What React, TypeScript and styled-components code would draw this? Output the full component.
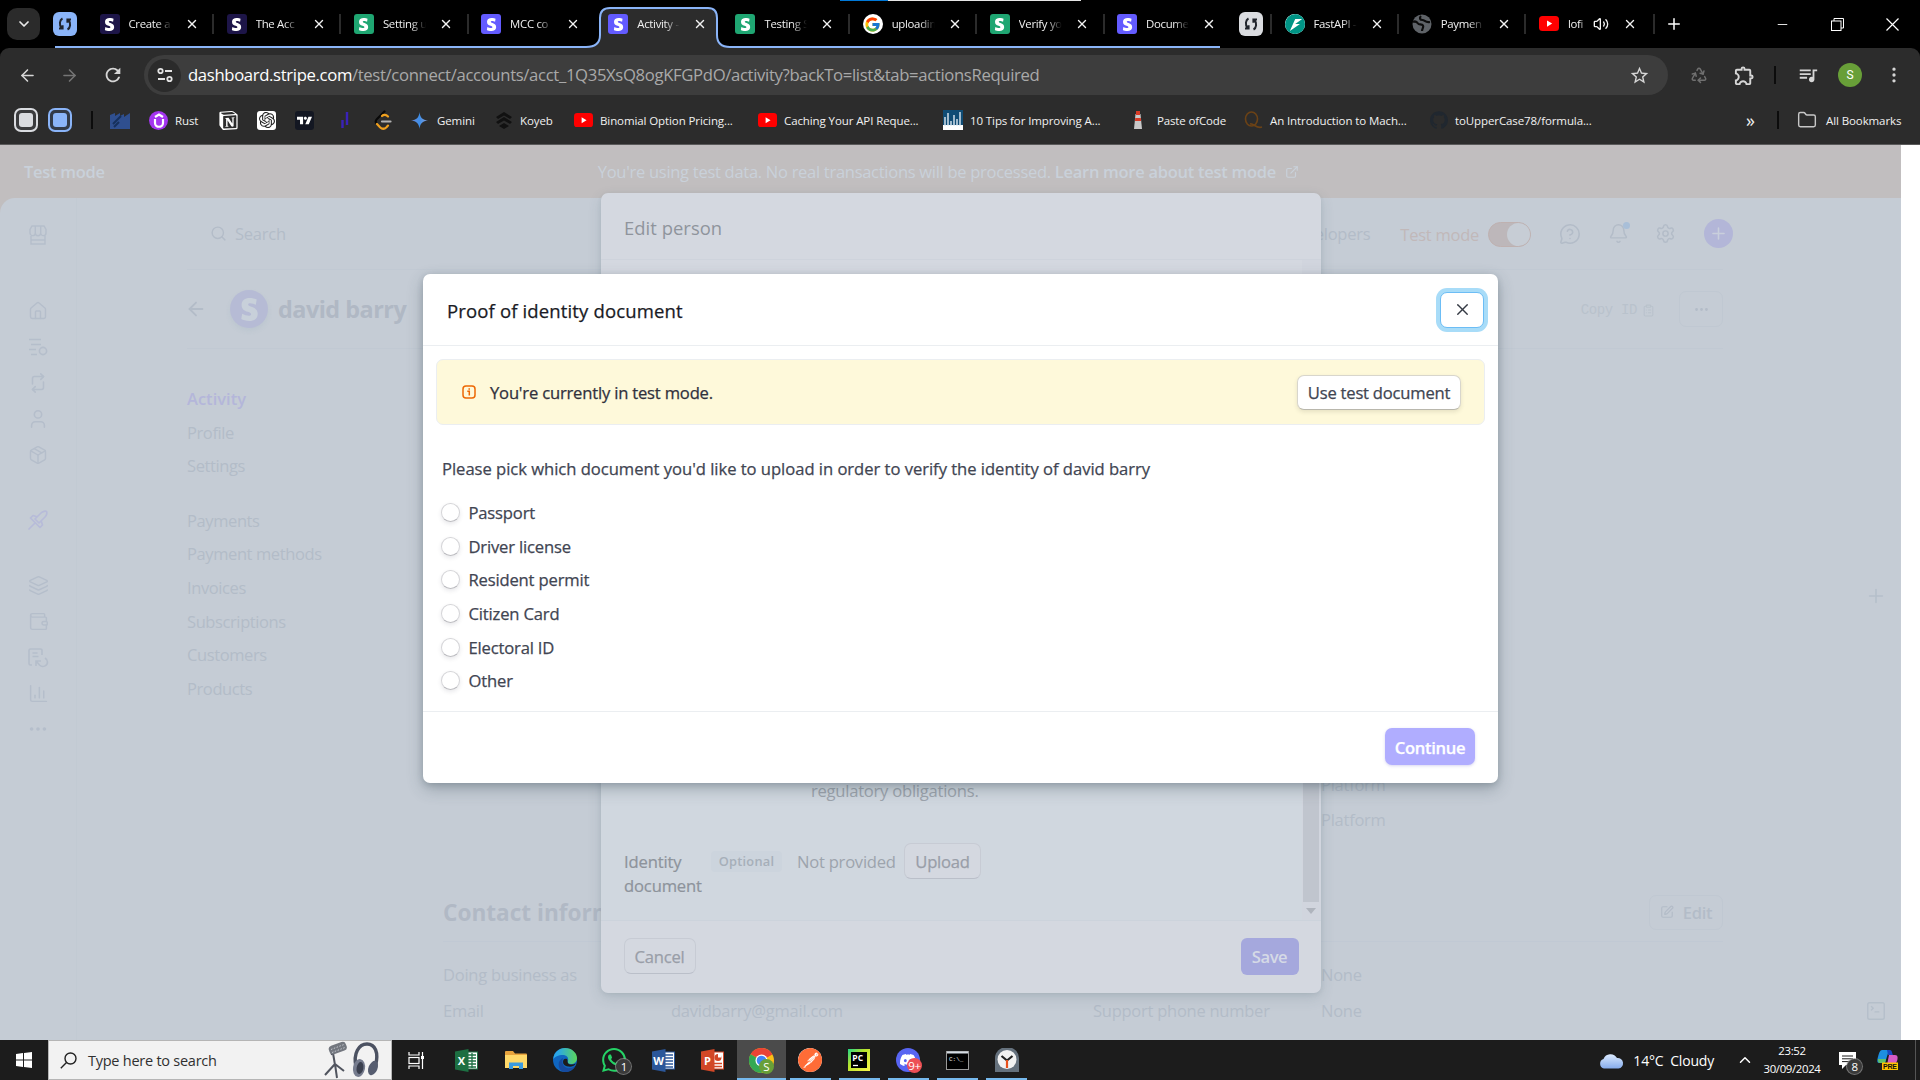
import React from "react";
import styled, { createGlobalStyle, css } from "styled-components";
import {
  ArrowLeft, ArrowRight, ChevronDown, ChevronUp, X, Plus, Minus, Recycle, Folder,
  Home, Repeat2, User, Package, Layers, Wallet, ChartColumn, Ellipsis, Search, MessageCircleQuestionMark,
  Bell, Settings, ClipboardList, SquarePen, SquareTerminal, ExternalLink, EllipsisVertical, Volume2,
} from "lucide-react";
import {
  SiStripe, SiNotion, SiOpenai, SiGithub, SiFastapi, SiPostman, SiDiscord, SiWhatsapp, SiTradingview,
} from "react-icons/si";
import { FcGoogle } from "react-icons/fc";
import { MdQueueMusic, MdOutlineExtension, MdStarBorder, MdRefresh } from "react-icons/md";

const Global = createGlobalStyle`
  * { box-sizing: border-box; }
  html, body { margin: 0; background: #000; }
  body { font-family: "Open Sans", "Noto Sans", sans-serif; overflow: hidden; }
  svg { flex: none; display: block; }
`;

/* ---------- window ---------- */
const Screen = styled.div`
  width: 1920px;
  height: 1080px;
  display: flex;
  flex-direction: column;
  overflow: hidden;
  position: relative;
`;
const LoadingStrip = styled.div`
  position: absolute;
  top: 0;
  left: 840px;
  width: 241px;
  height: 1px;
  background: linear-gradient(90deg, #0078d7 48px, #e6e6e6 48px);
`;
const TabStrip = styled.div`
  height: 48px;
  background: #000;
  display: flex;
  align-items: center;
  padding-left: 7px;
  color: #e8e8e8;
`;
const TabSearch = styled.div`
  width: 33px;
  height: 32px;
  border-radius: 10px;
  background: #2b2b2b;
  display: grid;
  place-items: center;
  margin-right: 13px;
`;
const GroupChip = styled.div<{ $bg: string }>`
  width: 24px;
  height: 24px;
  border-radius: 6px;
  background: ${(p) => p.$bg};
  color: #222;
  display: grid;
  place-items: center;
`;
const Grouped = styled.div`
  height: 48px;
  width: 1167px;
  margin-left: 0;
  padding-bottom: 0;
  display: flex;
  align-items: center;
  background: linear-gradient(#8ab4f8, #8ab4f8) 2px 46px / 1165px 2px no-repeat;
`;
const GroupHead = styled.div`
  width: 33px;
  height: 48px;
  flex: none;
  display: flex;
  align-items: center;
`;
const TabBox = styled.div<{ $sep?: boolean }>`
  width: 127.2px;
  height: 48px;
  flex: none;
  display: flex;
  align-items: center;
  padding-left: 13.5px;
  position: relative;
  ${(p) =>
    p.$sep &&
    css`
      &::before {
        content: "";
        position: absolute;
        left: -1px;
        top: 14px;
        width: 2px;
        height: 20px;
        background: #2b2b2b;
      }
    `}
`;
const ActiveShape = styled.svg`
  position: absolute;
  left: -9px;
  top: 6px;
`;
const TabText = styled.span<{ $w?: number }>`
  position: relative;
  margin-left: 9px;
  width: ${(p) => p.$w ?? 43}px;
  overflow: hidden;
  white-space: nowrap;
  font-size: 11.4px;
  line-height: 20px;
  letter-spacing: -0.3px;
  color: #f0f0f0;
  mask-image: linear-gradient(90deg, #000 65%, transparent);
`;
const TabClose = styled.span<{ $gap?: number }>`
  position: relative;
  margin-left: ${(p) => p.$gap ?? 13}px;
  color: #f2f2f2;
`;
const Fav = styled.span<{ $bg?: string; $round?: boolean; $size?: number; $fg?: string }>`
  position: relative;
  width: ${(p) => p.$size ?? 20}px;
  height: ${(p) => p.$size ?? 20}px;
  flex: none;
  border-radius: ${(p) => (p.$round ? "50%" : "3px")};
  background: ${(p) => p.$bg ?? "transparent"};
  color: ${(p) => p.$fg ?? "#fff"};
  display: grid;
  place-items: center;
  overflow: hidden;
`;
const ChipSlot = styled.div`
  width: 51px;
  padding-left: 19px;
`;
const WindowButtons = styled.div`
  margin-left: auto;
  display: flex;
  color: #fff;
  > * { width: 55px; display: grid; place-items: center; }
`;
const NewTab = styled.div`
  width: 40px;
  display: grid;
  place-items: center;
  border-left: 2px solid #2b2b2b;
  height: 20px;
  color: #fff;
`;

const Toolbar = styled.div`
  height: 56px;
  background: #2c2c2c;
  border-radius: 9px 9px 0 0;
  display: flex;
  align-items: center;
  padding: 0 0 2px 6px;
  color: #d6d6d6;
`;
const ToolSlot = styled.div<{ $w: number; $fg?: string }>`
  width: ${(p) => p.$w}px;
  flex: none;
  display: grid;
  place-items: center;
  color: ${(p) => p.$fg ?? "inherit"};
`;
const Omnibox = styled.div`
  width: 1524px;
  height: 40px;
  border-radius: 20px;
  background: #3d3d3d;
  display: flex;
  align-items: center;
  padding: 0 18px 0 4px;
  margin-left: 8px;
  flex: none;
`;
const SiteInfo = styled.div`
  width: 33px;
  height: 33px;
  border-radius: 50%;
  background: #2b2b2b;
  display: grid;
  place-items: center;
`;
const Url = styled.div`
  flex: 1;
  margin-left: 7px;
  margin-top: -2px;
  font-size: 16.7px;
  letter-spacing: -0.35px;
  color: #a9a9a9;
  white-space: nowrap;
  b { font-weight: 400; color: #fff; }
`;
const Divider = styled.div<{ $h: number }>`
  width: 2px;
  height: ${(p) => p.$h}px;
  background: #0c0c0c;
`;
const Avatar = styled.div`
  width: 24px;
  height: 24px;
  border-radius: 50%;
  background: #689f38;
  color: #fff;
  font: 12px/24px Roboto, sans-serif;
  text-align: center;
`;
const Bookmarks = styled.div`
  height: 41px;
  background: #2c2c2c;
  border-bottom: 1px solid #5a5a5a;
  display: flex;
  align-items: center;
  padding: 0 0 8px 14px;
`;
const Mark = styled.div<{ $w: number; $big?: boolean }>`
  width: ${(p) => p.$w}px;
  display: flex;
  align-items: center;
  gap: 7px;
  flex: none;
  font-size: ${(p) => (p.$big ? 18 : 11.5)}px;
  letter-spacing: -0.1px;
  color: #f1f1f1;
  white-space: nowrap;
`;
const MarkName = styled.span<{ $ls?: number }>`
  margin-left: 2px;
  letter-spacing: ${(p) => p.$ls ?? -0.1}px;
`;
const SavedGroup = styled.div<{ $c: string; $rim: string }>`
  width: 24px;
  height: 24px;
  border: 2px solid ${(p) => p.$c};
  border-radius: 7px;
  padding: 3px;
  background: ${(p) => p.$rim};
  &::after { content: ""; display: block; height: 14px; border-radius: 3px; background: ${(p) => p.$c}; }
`;

/* ---------- dashboard ---------- */
const Viewport = styled.div`
  height: 895px;
  position: relative;
  overflow: hidden;
  background: #fff;
  display: flex;
`;
const Page = styled.div`
  width: 1901px;
  height: 895px;
  background: #c1bebf;
  overflow: hidden;
`;
const Banner = styled.div`
  height: 53px;
  display: flex;
  align-items: center;
  padding-left: 24px;
  font-size: 16.5px;
  letter-spacing: -0.28px;
  color: #c9d1da;
  white-space: nowrap;
  b { font-weight: 600; }
`;
const BannerNote = styled.div`
  display: flex;
  align-items: center;
  gap: 9px;
  margin-left: 493px;
`;
const Shell = styled.div`
  height: 842px;
  background: #c5ccd5;
  border-radius: 15px 0 0 0;
  display: flex;
`;
const Side = styled.nav`
  width: 77px;
  border-right: 1px solid #c2cad3;
  display: flex;
  flex-direction: column;
  align-items: center;
  color: #b5becb;
  padding-top: 19px;
`;
const SideItem = styled.div<{ $gap?: number; $fg?: string }>`
  height: 36px;
  margin-top: ${(p) => p.$gap ?? 0}px;
  display: grid;
  place-items: center;
  color: ${(p) => p.$fg ?? "inherit"};
`;
const Content = styled.div`
  flex: 1;
  padding: 0 127px 0 110px;
  white-space: nowrap;
  color: #b3bcc8;
  font-size: 16.5px;
  letter-spacing: -0.25px;
`;
const TopRow = styled.div`
  height: 72px;
  border-bottom: 1px solid #c1c9d3;
  display: flex;
  align-items: center;
  gap: 8px;
  padding-left: 23px;
`;
const TopTools = styled.div`
  margin-left: auto;
  display: flex;
  align-items: center;
`;
const TestLabel = styled.span`
  color: #c1b8b9;
  margin: 2px 9px 0 30px;
`;
const Toggle = styled.div`
  width: 43px;
  height: 25px;
  border-radius: 13px;
  background: #bdb7ba;
  border: 1px solid #bfb1b0;
  display: flex;
  justify-content: flex-end;
  margin: 2px 28px 0 0;
  &::after { content: ""; width: 23px; height: 23px; border-radius: 50%; background: #c7cdd5; }
`;
const BellWrap = styled.div`
  position: relative;
  margin: 0 26px 0 27px;
  &::after {
    content: "";
    position: absolute;
    right: -1px;
    top: -1px;
    width: 7px;
    height: 7px;
    border-radius: 50%;
    background: #a9bfd8;
  }
`;
const AddCircle = styled.div`
  width: 29px;
  height: 29px;
  border-radius: 50%;
  background: #b3b6d8;
  color: #c9cfdc;
  display: grid;
  place-items: center;
  margin: 0 -10px 0 28px;
`;
const TitleRow = styled.div`
  height: 79px;
  border-bottom: 1px solid #c1c9d3;
  display: flex;
  align-items: center;
`;
const BackIcon = styled(ArrowLeft)`
  margin-left: -2px;
`;
const Logo = styled.div`
  width: 38px;
  height: 38px;
  border-radius: 50%;
  background: #b6bbd5;
  color: #c8d0da;
  display: grid;
  place-items: center;
  margin: 0 10px 0 23px;
  box-shadow: 0 3px 5px rgba(120, 160, 170, 0.12);
`;
const Name = styled.h1`
  margin: 0;
  font-size: 23.4px;
  font-weight: 700;
  letter-spacing: -0.5px;
  color: #b0b8c4;
`;
const CopyId = styled.div`
  margin: 2px 24px 0 auto;
  display: flex;
  align-items: center;
  gap: 5px;
  font: 14px "Liberation Mono", monospace;
  letter-spacing: -0.35px;
  color: #b9c2cc;
`;
const Ghost = styled.div<{ $w: number; $h: number }>`
  width: ${(p) => p.$w}px;
  height: ${(p) => p.$h}px;
  border: 1px solid #c0c8d2;
  border-radius: 7px;
  display: flex;
  align-items: center;
  justify-content: center;
  gap: 9px;
  font-weight: 600;
`;
const Columns = styled.div`
  display: flex;
`;
const SubNav = styled.div`
  width: 256px;
  padding-top: 33px;
  letter-spacing: -0.4px;
`;
const SubItem = styled.div<{ $on?: boolean; $gap?: number }>`
  height: 33.6px;
  line-height: 33.6px;
  margin-top: ${(p) => p.$gap ?? 0}px;
  ${(p) => p.$on && css`color: #b4b6da; font-weight: 600; letter-spacing: 0;`}
`;
const Main = styled.div`
  width: 1280px;
  padding-top: 418px;
`;
const DetailGrid = styled.div<{ $h: number }>`
  display: grid;
  grid-template-columns: 228px 422px 228px 1fr;
  height: ${(p) => p.$h}px;
  align-items: center;
`;
const SectionHead = styled.div`
  margin-top: 49px;
  height: 54px;
  display: flex;
  align-items: center;
  justify-content: space-between;
  padding-bottom: 2px;
`;
const SectionTitle = styled.h2`
  margin: 0;
  font-size: 22.6px;
  letter-spacing: 0;
  color: #b1b9c5;
`;
const Rule = styled.div`
  height: 1px;
  background: #c1c9d4;
  margin: 1px 0 14px;
`;
const Rail = styled.div`
  width: 51px;
  display: flex;
  flex-direction: column;
  align-items: center;
  color: #b5bfca;
  padding-top: 387px;
  gap: 393px;
`;

/* ---------- dialogs ---------- */
const EditDialog = styled.section`
  position: absolute;
  left: 601px;
  top: 48px;
  width: 720px;
  height: 800px;
  border-radius: 7px;
  background: #d4d8e0;
  box-shadow: 0 5px 14px rgba(60, 90, 100, 0.16), 0 1px 4px rgba(60, 90, 100, 0.1);
  display: flex;
  flex-direction: column;
  font-size: 16.6px;
  color: #9da4ad;
  white-space: nowrap;
  letter-spacing: -0.25px;
`;
const EditHead = styled.div`
  height: 67px;
  border-bottom: 1px solid #ced3dc;
  padding: 0 23px;
  line-height: 69px;
  font-size: 18.4px;
  font-weight: 500;
  letter-spacing: 0.05px;
  color: #8f949c;
`;
const EditBody = styled.div`
  flex: 1;
  background: linear-gradient(#d4d8e0 30px, #d0d7df 200px);
  border-bottom: 1px solid #ccd3dc;
  display: flex;
`;
const EditFields = styled.div`
  flex: 1;
  padding: 517px 0 0 23px;
`;
const Obligations = styled.div`
  padding-left: 187px;
  height: 54px;
  line-height: 28px;
  margin-bottom: 12px;
`;
const DocRow = styled.div`
  display: flex;
  align-items: flex-start;
`;
const DocLabel = styled.div`
  width: 87px;
  line-height: 24px;
  padding-top: 7px;
  color: #8d939b;
  font-weight: 500;
  letter-spacing: -0.15px;
  -webkit-text-stroke: 0.2px;
`;
const OptionalTag = styled.span`
  width: 71px;
  height: 21px;
  margin: 8px 15px 0 0;
  border-radius: 4px;
  background: #ccd4dd;
  text-align: center;
  font-size: 12.8px;
  line-height: 21px;
  font-weight: 600;
  letter-spacing: 0.25px;
  color: #a6afb9;
`;
const Missing = styled.span`
  width: 107px;
  line-height: 37px;
`;
const SoftButton = styled.span<{ $w: number }>`
  width: ${(p) => p.$w}px;
  height: 36px;
  border: 1px solid #c7cbd4;
  border-bottom-color: #babfc9;
  border-radius: 7px;
  background: #d4d8e0;
  text-align: center;
  line-height: 36px;
  font-weight: 500;
  color: #999ea8;
  -webkit-text-stroke: 0.25px;
`;
const ScrollTrack = styled.div`
  width: 19px;
  background: #d1d5de;
  display: flex;
  flex-direction: column;
  align-items: center;
  padding: 24px 1px 0 0;
`;
const Thumb = styled.div`
  width: 16px;
  height: 618px;
  background: #c0c5ce;
  margin-bottom: 6px;
`;
const EditFoot = styled.div`
  height: 72px;
  padding: 0 22.5px 2px;
  display: flex;
  justify-content: space-between;
  align-items: center;
`;
const SaveButton = styled.span`
  width: 58px;
  height: 37px;
  border-radius: 6px;
  background: #a5a8dd;
  color: #d5dae6;
  text-align: center;
  line-height: 37px;
  font-weight: 600;
  letter-spacing: -0.4px;
`;
const ProofDialog = styled.section`
  position: absolute;
  left: 423px;
  top: 129px;
  width: 1075px;
  height: 509px;
  border-radius: 7px;
  background: #fff;
  box-shadow: 0 6px 16px rgba(50, 70, 80, 0.3), 0 2px 6px rgba(50, 70, 80, 0.2);
  font-size: 16.6px;
  letter-spacing: -0.17px;
  color: #414552;
  white-space: nowrap;
  -webkit-text-stroke: 0.25px;
`;
const ProofHead = styled.header`
  height: 72px;
  border-bottom: 1px solid #ebeef1;
  padding: 1px 13px 0 24px;
  display: flex;
  align-items: center;
  justify-content: space-between;
  font-size: 18.5px;
  font-weight: 500;
  letter-spacing: 0.15px;
  color: #1a1b25;
`;
const CloseButton = styled.button`
  width: 44px;
  height: 36px;
  margin: -1px 1px 0 0;
  padding: 0;
  border: 1px solid #6cbdf5;
  border-radius: 7px;
  background: #fff;
  box-shadow: 0 0 0 4px #a8dcf8;
  color: #353a44;
  display: grid;
  place-items: center;
`;
const Notice = styled.div`
  margin: 13px 13px 0;
  height: 66px;
  border: 1px solid #ebeef1;
  border-radius: 7px;
  background: #fef9da;
  padding: 0 23px 0 25px;
  display: flex;
  align-items: center;
  color: #30313d;
  font-weight: 500;
`;
const NoticeText = styled.span`
  flex: 1;
  margin-left: 14px;
  letter-spacing: -0.19px;
`;
const TestButton = styled.button`
  width: 164px;
  height: 35px;
  padding: 1px 0 0;
  border: 1px solid #d8d6cc;
  border-bottom-color: #b9b7ac;
  border-radius: 7px;
  background: #fff;
  box-shadow: 0 2px 4px rgba(60, 60, 40, 0.12);
  font: 500 16.6px "Open Sans", sans-serif;
  letter-spacing: -0.22px;
  color: #414552;
  -webkit-text-stroke: 0.25px;
`;
const Prompt = styled.p`
  margin: 0;
  padding: 26px 0 0 19px;
  line-height: 36px;
  font-weight: 500;
  letter-spacing: -0.03px;
`;
const Options = styled.div`
  padding: 9px 0 0 18px;
`;
const Option = styled.label`
  height: 33.6px;
  display: flex;
  align-items: center;
  gap: 8.5px;
  font-weight: 500;
`;
const Radio = styled.span`
  width: 19px;
  height: 19px;
  border-radius: 50%;
  background: #fff;
  border: 1px solid #d5d5d8;
  border-bottom-color: #bcbcc0;
  box-shadow: 0 2px 4px rgba(60, 60, 80, 0.12);
`;
const ProofFoot = styled.footer`
  margin-top: 13px;
  height: 71px;
  border-top: 1px solid #ebeef1;
  padding: 0 23px;
  display: flex;
  align-items: center;
  justify-content: flex-end;
`;
const ContinueButton = styled.button`
  width: 90px;
  height: 37px;
  padding: 1px 0 0;
  border: 0;
  border-radius: 7px;
  background: #b0adff;
  color: #fff;
  font: 600 16.6px "Open Sans", sans-serif;
  letter-spacing: -0.3px;
  box-shadow: 0 1px 3px rgba(100, 90, 200, 0.25);
`;

/* ---------- taskbar ---------- */
const Taskbar = styled.div`
  height: 40px;
  background: #1c1c1c;
  display: flex;
  align-items: center;
  color: #fff;
`;
const StartButton = styled.div`
  width: 48px;
  display: grid;
  place-items: center;
`;
const SearchBox = styled.div`
  width: 344px;
  height: 40px;
  background: #f2f2f2;
  border: 1px solid #b5b5b5;
  display: flex;
  align-items: center;
  padding: 0 11px 0 11px;
  color: #303030;
  font-size: 14.5px;
  letter-spacing: -0.25px;
`;
const SearchHint = styled.span`
  flex: 1;
  margin-left: 11px;
  margin-top: 1px;
`;
const TaskItem = styled.div<{ $open?: boolean; $on?: boolean }>`
  width: 49.1px;
  height: 40px;
  flex: none;
  display: grid;
  place-items: center;
  position: relative;
  background: ${(p) => (p.$on ? "#4b4b4b" : "transparent")};
  &::after {
    content: "";
    position: absolute;
    bottom: 0;
    left: ${(p) => (p.$on ? 0 : 4)}px;
    right: ${(p) => (p.$on ? 0 : 4)}px;
    height: 2px;
    background: ${(p) => (p.$open ? "#76b9ed" : "transparent")};
  }
`;
const TaskList = styled.div`
  display: flex;
  margin-left: 1px;
`;
const Badge = styled.span<{ $bg: string; $x: number; $y: number; $s: number; $rim?: boolean }>`
  position: absolute;
  left: ${(p) => p.$x}px;
  top: ${(p) => p.$y}px;
  width: ${(p) => p.$s}px;
  height: ${(p) => p.$s}px;
  border-radius: 50%;
  background: ${(p) => p.$bg};
  font-size: 11.5px;
  line-height: ${(p) => p.$s}px;
  letter-spacing: -0.5px;
  text-align: center;
  ${(p) => p.$rim && css`box-shadow: 0 0 0 1px rgba(150, 150, 150, 0.7);`}
`;
const Tray = styled.div`
  margin-left: auto;
  display: flex;
  align-items: center;
  height: 40px;
  font-size: 14px;
  letter-spacing: -0.2px;
  white-space: pre;
`;
const Weather = styled.span`
  margin: 0 13px 0 9px;
`;
const TrayChevron = styled.span`
  margin: 0 1px 0 9px;
`;
const Clock = styled.div`
  width: 74px;
  text-align: center;
  font-size: 11.4px;
  line-height: 18px;
  letter-spacing: -0.35px;
  margin-top: -1px;
`;
const TrayBox = styled.div<{ $ml: number }>`
  position: relative;
  margin-left: ${(p) => p.$ml}px;
`;
const DesktopEdge = styled.div`
  width: 5px;
  height: 40px;
  border-left: 1px solid #555;
  margin-left: 17px;
`;

/* ---------- drawings ---------- */
const YouTube = ({ w = 20 }) => (
  <svg width={w} height={w * 0.76} viewBox="0 0 20 15">
    <rect width="20" height="15" rx="3.5" fill="#f00" />
    <path d="M8 4.3v6.4l5.2-3.2z" fill="#fff" />
  </svg>
);
const Globe = () => (
  <svg width="20" height="20" viewBox="0 0 20 20">
    <circle cx="10" cy="10" r="9.5" fill="#5f6368" />
    <path d="M1 8c2-1 4 0 5 1.500s4 0 5 2-1 3-1 5.500M9 2c-2 2-1 4 1.500 4S13 9 18 8" fill="none" stroke="#0c0c0c" strokeWidth="2.2" />
  </svg>
);
const Loop = ({ s = 18 }) => (
  <svg width={s} height={s} viewBox="0 0 18 18" fill="none" stroke="#20242c" strokeWidth="2">
    <path d="M6.5 3.5C3.5 5 3 10 5.5 13M3 13.6h3.6v-3.4M11.500 14.500C14.500 13 15 8 12.500 5M15 4.400h-3.600v3.400" />
  </svg>
);
const TuneIcon = () => (
  <svg width="18" height="18" viewBox="0 0 18 18" fill="none" stroke="#e3e3e3" strokeWidth="1.800">
    <circle cx="4.500" cy="5" r="2.200" />
    <path d="M9 5h7M2 13h7" />
    <circle cx="13.500" cy="13" r="2.200" />
  </svg>
);
const LeetCode = () => (
  <svg width="18" height="20" viewBox="0 0 18 20" fill="none" strokeWidth="2.200" strokeLinecap="round">
    <path d="M10.500 1.500L3 9c-1.500 1.500-1.500 3.500 0 5" stroke="#080808" />
    <path d="M14 6.500C12 4.500 9.500 4.500 8 6M3 14l3 3.200c2 2 4.500 2 6.500 0l1.500-1.600" stroke="#f0a01e" />
    <path d="M8 11.500h8.500" stroke="#b3b3b3" />
  </svg>
);
const stroke = { fill: "none", stroke: "currentColor", strokeWidth: 1.6 } as const;
const StoreIcon = () => (
  <svg width="18" height="20" viewBox="0 0 18 20" {...stroke} strokeWidth={1.4}>
    <path d="M3 1h12l2 3.500V8a2.600 2.600 0 0 1-5.300 0 2.700 2.700 0 0 1-5.400 0A2.600 2.600 0 0 1 1 8V4.500zM6.300 1v7M11.700 1v7M2 11v8h14v-8M2 15h14" />
  </svg>
);
const LaunchIcon = () => (
  <svg width="20" height="20" viewBox="0 0 20 20" {...stroke} strokeWidth={1.7} strokeLinejoin="round" strokeLinecap="round">
    <path d="M7 9l6-6c1.800-1.800 4.500-2.200 5.500-1.500C19.200 2.500 18.800 5.200 17 7l-6 6zM9 6.800L5 5.500 2.500 8 12 17.500l2.500-2.500-1.300-4M6.500 13.500L1 19" />
  </svg>
);
const BalanceIcon = () => (
  <svg width="20" height="20" viewBox="0 0 20 20" {...stroke}>
    <path d="M1 2.500h12M3 7.500h10M1 12.500h7M3 17.500h6" />
    <circle cx="15" cy="14" r="3.600" />
  </svg>
);
const BillingIcon = () => (
  <svg width="21" height="21" viewBox="0 0 21 21" {...stroke}>
    <path d="M4 18H2.500A1.500 1.500 0 0 1 1 16.500v-13A1.500 1.500 0 0 1 2.500 2h10A1.500 1.500 0 0 1 14 3.500V8M4.500 6h5M4.500 9.500h6M8 19v-5h5M8.500 14.500l3 3.500c3 3 8 1 8-3 0-2-1-3-2.500-4" />
  </svg>
);
const SwapIcon = styled(Repeat2)`
  transform: rotate(90deg);
`;
const InfoIcon = () => (
  <svg width="14" height="14" viewBox="0 0 14 14">
    <rect x="1" y="1" width="12" height="12" rx="3" fill="none" stroke="#ed6804" strokeWidth="1.500" />
    <path d="M5.300 6.300H7.300V10.500M7.200 3.200v1.600" stroke="#ed6804" strokeWidth="1.500" fill="none" />
  </svg>
);
const Mic = () => (
  <svg width="58" height="38" viewBox="0 0 58 38">
    <path d="M11 12l2 12M13 23L3 34M13 23l2 14M13 23l9 7M10 14l-1-6" stroke="#50545e" strokeWidth="2" fill="none" />
    <rect x="7" y="3" width="18" height="9" rx="3.500" transform="rotate(-20 15 8)" fill="#73777f" />
    <path d="M9 8.500l13-5M10 11.500l13-5" stroke="#c5c8d0" strokeDasharray="1.500 1.500" />
    <path d="M34 26C31 12 37 3 45 3s12 8 8.500 22" fill="none" stroke="#4c5262" strokeWidth="3.400" />
    <ellipse cx="37" cy="27" rx="6" ry="9" transform="rotate(10 37 27)" fill="#767c8e" />
    <ellipse cx="38" cy="27" rx="3.400" ry="6" transform="rotate(10 38 27)" fill="#3a3f4e" />
    <ellipse cx="51" cy="27" rx="4.500" ry="7.500" transform="rotate(22 51 27)" fill="#565d70" />
  </svg>
);
const Office = ({ c, d, l, kind }: { c: string; d: string; l: string; kind: string }) => (
  <svg width="23" height="23" viewBox="0 0 23 23">
    <rect x="11" y="3" width="11.500" height="17" fill="#fff" stroke={c} />
    {kind === "grid" && <path d="M13 6h8M13 9h8M13 12h8M13 15h8M13 18h8M17 4v15" stroke={c} strokeWidth="1.300" />}
    {kind === "lines" && <path d="M13 6h8M13 9h8M13 12h8M13 15h8M13 18h8" stroke={c} strokeWidth="1.300" />}
    {kind === "pie" && (
      <>
        <circle cx="17" cy="8.500" r="3.500" fill={c} />
        <path d="M17 8.500V5h3.500v3.500z" fill="#fff" />
        <path d="M13 14.500h8M13 17.500h8" stroke={c} strokeWidth="1.300" />
      </>
    )}
    <path d="M0 2.500L13.500 0v23L0 20.500z" fill={d} />
    <text x="6.500" y="15.500" fontSize="11" fontWeight="700" textAnchor="middle" fill="#fff" fontFamily="Open Sans">{l}</text>
  </svg>
);
const FolderTask = () => (
  <svg width="22" height="20" viewBox="0 0 22 20">
    <path d="M0 2a1 1 0 0 1 1-1h7l2 2.500h11a1 1 0 0 1 1 1V18H0z" fill="#e8a33d" />
    <path d="M0 5h22v13H0z" fill="#ffd869" />
    <path d="M4 19v-6.500h14V19h-4v-3H8v3z" fill="#3c9be0" />
  </svg>
);
const Edge = () => (
  <svg width="24" height="24" viewBox="0 0 24 24">
    <defs>
      <linearGradient id="edgeTop" x1="0" x2="1">
        <stop offset="0.200" stopColor="#2aa7e8" />
        <stop offset="1" stopColor="#5bd65a" />
      </linearGradient>
    </defs>
    <circle cx="12" cy="12" r="12" fill="#0f66c0" />
    <path d="M.3 11C1 4 6 0 12 0c7 0 12 5 12 10 0 4-3 6-6 6-3 0-4-1-3-3 1-4-2-6-5-6-5 0-8 2-9.700 4z" fill="url(#edgeTop)" />
    <path d="M9.500 12c-1 5 3 9 8 8 2 0 4-2 5-3-2 5-6 7-10 7C6 24 5 17 6 14c1-2 2-3 4-4z" fill="#164a9e" />
    <path d="M10 14c0-3 2-4 4-3 1 1 0 3 1 4 1 2 5 2 8 .5-2 3-5 3.500-8 3-3-.5-5-2-5-4.500z" fill="#1c1c1c" />
  </svg>
);
const Chrome = () => (
  <svg width="25" height="25" viewBox="0 0 24 24">
    <circle cx="12" cy="12" r="12" fill="#fbc116" />
    <path d="M12 12L1.600 6A12 12 0 0 1 22.400 6z" fill="#ea4335" />
    <path d="M1.600 6A12 12 0 0 0 12 24l5-9-5-3z" fill="#34a853" />
    <path d="M12 6h10.400L12 12z" fill="#ea4335" />
    <circle cx="12" cy="12" r="5.800" fill="#fff" />
    <circle cx="12" cy="12" r="4.600" fill="#4285f4" />
  </svg>
);
const PyCharm = () => (
  <svg width="22" height="22" viewBox="0 0 22 22">
    <defs>
      <linearGradient id="pc" x1="0" y1="0" x2="1" y2="1">
        <stop offset="0" stopColor="#21d789" />
        <stop offset="0.400" stopColor="#b8e22c" />
        <stop offset="1" stopColor="#fcf84a" />
      </linearGradient>
    </defs>
    <rect width="22" height="22" fill="url(#pc)" />
    <rect x="3" y="3" width="16" height="16" fill="#000" />
    <text x="4.300" y="12" fontSize="8.500" fontWeight="700" fill="#fff" fontFamily="Open Sans">PC</text>
    <path d="M5 16.500h5" stroke="#fff" strokeWidth="1.300" />
  </svg>
);
const Cmd = () => (
  <svg width="23" height="19" viewBox="0 0 23 19">
    <rect x=".5" y=".5" width="22" height="18" fill="#000" stroke="#9a9a9a" />
    <path d="M1 1.500h21" stroke="#d5dbe3" strokeWidth="2" />
    <text x="3" y="10" fontSize="6" fill="#e8e8e8" fontFamily="Liberation Mono">C:\_</text>
  </svg>
);
const ClockApp = () => (
  <svg width="24" height="24" viewBox="0 0 24 24">
    <path d="M0 24V10a12 11 0 0 1 24 0v14z" fill="#65717d" />
    <circle cx="12" cy="11.500" r="9.500" fill="#f2f2f2" />
    <path d="M12 12.500L6.500 8M12 12.500L17.500 8" stroke="#222" strokeWidth="2.200" />
    <path d="M12 12v8" stroke="#e8501c" strokeWidth="2.200" />
  </svg>
);
const TaskView = () => (
  <svg width="17" height="17" viewBox="0 0 17 17" fill="none" stroke="#fff" strokeWidth="1.200">
    <path d="M1 0v3h10V0M1 17v-3h10v3M14.500 0v17" />
    <rect x="1" y="5.500" width="10" height="6" />
    <path d="M13 5.500h3" strokeWidth="3" />
  </svg>
);
const Cloud = () => (
  <svg width="25" height="17" viewBox="0 0 25 17">
    <defs>
      <linearGradient id="cl" x1="0" y1="0" x2="0" y2="1">
        <stop offset="0" stopColor="#dcebff" />
        <stop offset="1" stopColor="#86acec" />
      </linearGradient>
    </defs>
    <path d="M5 16.500a5 5 0 0 1-.5-9.600A7.500 7.500 0 0 1 18 6a5.300 5.300 0 0 1 1.500 10.500z" fill="url(#cl)" />
  </svg>
);
const Copilot = () => (
  <svg width="21" height="20" viewBox="0 0 21 20">
    <path d="M5 0h7l-4 13H2c-2 0-2-3-1-6 1-4 2-7 4-7z" fill="#1c8fe0" />
    <path d="M1 9h8l-1 4H3c-2 0-2-2-2-4z" fill="#5ec26a" />
    <path d="M10 0h3c2 0 2 3 3 5h-5z" fill="#1846c0" />
    <path d="M12 5h6c3 0 3 3 2 6l-2 4h-8z" fill="#d65bc6" />
    <rect x="5" y="12.500" width="16" height="7.500" fill="#ffc400" />
    <text x="6" y="18.800" fontSize="7" fontWeight="700" fill="#111" fontFamily="Liberation Sans">PRE</text>
  </svg>
);
const FastApiFav = styled(SiFastapi)`
  background: #fff;
`;

/* ---------- data ---------- */
type Kind = "navy" | "green" | "violet" | "google";
const favColor: Record<string, string> = { navy: "#1d1548", green: "#1fa672", violet: "#635bff" };
const StripeFav = ({ kind }: { kind: Kind }) =>
  kind === "google" ? (
    <Fav $bg="#fff" $round><FcGoogle size={17} /></Fav>
  ) : (
    <Fav $bg={favColor[kind]}><SiStripe size={13} /></Fav>
  );
const groupTabs: { kind: Kind; text: string; active?: boolean }[] = [
  { kind: "navy", text: "Create a" },
  { kind: "navy", text: "The Acc" },
  { kind: "green", text: "Setting u" },
  { kind: "violet", text: "MCC co" },
  { kind: "violet", text: "Activity -", active: true },
  { kind: "green", text: "Testing S" },
  { kind: "google", text: "uploadin" },
  { kind: "green", text: "Verify yo" },
  { kind: "violet", text: "Docume" },
];
const documents = ["Passport", "Driver license", "Resident permit", "Citizen Card", "Electoral ID", "Other"];

export default function App() {
  return (
    <Screen>
      <Global />
      <TabStrip>
        <TabSearch><ChevronDown size={16} strokeWidth={2.6} /></TabSearch>
        <Grouped>
          <GroupHead><GroupChip $bg="#8ab4f8"><Loop /></GroupChip></GroupHead>
          {groupTabs.map((t, i) => (
            <TabBox key={t.text} $sep={i > 0 && i !== 4 && i !== 5}>
              {t.active && (
                <ActiveShape width="144" height="42" viewBox="0 0 144 42">
                  <path d="M0 41C9 41 14 37 14 29V12C14 5 18 2 24 2H122C128 2 131 5 131 12V29C131 37 136 41 144 41V42H0z" fill="#2c2c2c" />
                  <path d="M0 41C9 41 14 37 14 29V12C14 5 18 2 24 2H122C128 2 131 5 131 12V29C131 37 136 41 144 41" fill="none" stroke="#8ab4f8" strokeWidth="2" />
                </ActiveShape>
              )}
              <StripeFav kind={t.kind} />
              <TabText>{t.text}</TabText>
              <TabClose><X size={14} strokeWidth={2.4} /></TabClose>
            </TabBox>
          ))}
        </Grouped>
        <ChipSlot><GroupChip $bg="#dadce0"><Loop /></GroupChip></ChipSlot>
        <TabBox $sep>
          <Fav $bg="#009485" $round><FastApiFav size={22} color="#009485" /></Fav>
          <TabText>FastAPI -</TabText>
          <TabClose><X size={14} strokeWidth={2.4} /></TabClose>
        </TabBox>
        <TabBox $sep>
          <Globe />
          <TabText>Paymen</TabText>
          <TabClose><X size={14} strokeWidth={2.4} /></TabClose>
        </TabBox>
        <TabBox $sep>
          <YouTube />
          <TabText $w={18}>lofi</TabText>
          <TabClose $gap={7}><Volume2 size={16} /></TabClose>
          <TabClose $gap={14}><X size={14} strokeWidth={2.4} /></TabClose>
        </TabBox>
        <NewTab><Plus size={18} /></NewTab>
        <WindowButtons>
          <span><Minus size={15} strokeWidth={1.4} /></span>
          <span>
            <svg width="13" height="13" viewBox="0 0 13 13" fill="none" stroke="#fff"><path d="M3 3V.5h9.500V10H10" /><rect x=".5" y="3" width="9.500" height="9.500" /></svg>
          </span>
          <span><svg width="13" height="13" viewBox="0 0 13 13" stroke="#fff" strokeWidth="1.200"><path d="M.5.5l12 12M12.500.5l-12 12" /></svg></span>
        </WindowButtons>
      </TabStrip>
      <LoadingStrip />

      <Toolbar>
        <ToolSlot $w={42}><ArrowLeft size={19} /></ToolSlot>
        <ToolSlot $w={42} $fg="#757575"><ArrowRight size={19} /></ToolSlot>
        <ToolSlot $w={46}><MdRefresh size={22} /></ToolSlot>
        <Omnibox>
          <SiteInfo><TuneIcon /></SiteInfo>
          <Url><b>dashboard.stripe.com</b>/test/connect/accounts/acct_1Q35XsQ8ogKFGPdO/activity?backTo=list&amp;tab=actionsRequired</Url>
          <MdStarBorder size={21} />
        </Omnibox>
        <ToolSlot $w={62} $fg="#707070"><Recycle size={18} /></ToolSlot>
        <ToolSlot $w={28}><MdOutlineExtension size={23} /></ToolSlot>
        <ToolSlot $w={34}><Divider $h={18} /></ToolSlot>
        <ToolSlot $w={32}><MdQueueMusic size={22} /></ToolSlot>
        <ToolSlot $w={52}><Avatar>S</Avatar></ToolSlot>
        <ToolSlot $w={36}><EllipsisVertical size={20} /></ToolSlot>
      </Toolbar>

      <Bookmarks>
        <Mark $w={34}><SavedGroup $c="#dadce0" $rim="#3a3b3d" /></Mark>
        <Mark $w={43}><SavedGroup $c="#8ab4f8" $rim="#323a48" /></Mark>
        <Mark $w={19}><Divider $h={18} /></Mark>
        <Mark $w={39}>
          <svg width="20" height="17" viewBox="0 0 20 17"><path d="M0 3l5-2v3l5-3v3l4-2v3l6-4v16H0z" fill="#2f4f8f" /><path d="M3 12l8-8M4 15l5-5" stroke="#16305c" strokeWidth="2" /></svg>
        </Mark>
        <Mark $w={69}>
          <Fav $bg="#a435f0" $round $size={19}>
            <svg width="12" height="15" viewBox="0 0 12 15" fill="none" stroke="#fff" strokeWidth="2.200"><path d="M2 6v4c0 5 8 5 8 0V6M2 4l4-2.500L10 4" /></svg>
          </Fav>
          Rust
        </Mark>
        <Mark $w={39}><Fav $fg="#fff"><SiNotion size={19} /></Fav></Mark>
        <Mark $w={38}><Fav $bg="#fff" $fg="#222" $size={19}><SiOpenai size={16} /></Fav></Mark>
        <Mark $w={45}><Fav $bg="#131722" $size={19}><SiTradingview size={15} /></Fav></Mark>
        <Mark $w={34}><svg width="10" height="18" viewBox="0 0 10 18"><path d="M2.500 9v8M7 1v13" stroke="#3a22b8" strokeWidth="2.400" /></svg></Mark>
        <Mark $w={37}><LeetCode /></Mark>
        <Mark $w={84}>
          <svg width="17" height="17" viewBox="0 0 17 17"><defs><linearGradient id="gm"><stop offset="0" stopColor="#6a8ad8" /><stop offset=".5" stopColor="#3f8ee8" /><stop offset="1" stopColor="#8aa0d8" /></linearGradient></defs><path d="M8.500 0C9 5.500 11.500 8 17 8.500 11.500 9 9 11.500 8.500 17 8 11.500 5.500 9 0 8.500 5.500 8 8 5.500 8.500 0z" fill="url(#gm)" /></svg>
          <MarkName>Gemini</MarkName>
        </Mark>
        <Mark $w={79}>
          <svg width="18" height="17" viewBox="0 0 18 17"><path d="M9 0l8 5-2 2-6-3.500L3 7 1 5zM9 5l8 5-2 2-6-3.500L3 12l-2-2zM9 11l5 3-5 3-5-3z" fill="#111" /></svg>
          Koyeb
        </Mark>
        <Mark $w={184}><YouTube w={19} />Binomial Option Pricing...</Mark>
        <Mark $w={185}><YouTube w={19} />Caching Your API Reque...</Mark>
        <Mark $w={185}>
          <svg width="20" height="20" viewBox="0 0 20 20"><path d="M0 0h20v20H0z" fill="#0f4c75" /><path d="M0 20v-5h20v5z" fill="#fff" /><path d="M2 16V7M5 16V3M8 16v-5M11 16V5M14 16V9M17 16V2" stroke="#dfeaf2" strokeWidth="1.400" /></svg>
          10 Tips for Improving A...
        </Mark>
        <Mark $w={116}>
          <svg width="20" height="18" viewBox="0 0 20 18"><path d="M7.500 3h5l1.500 15H6z" fill="#c9c9c9" /><path d="M8 0h4v4H8zM7.200 7h5.600l.3 3H7z" fill="#d83a25" /></svg>
          <MarkName $ls={-0.15}>Paste ofCode</MarkName>
        </Mark>
        <Mark $w={186}><svg width="19" height="19" viewBox="0 0 19 19" fill="none" stroke="#6b4216" strokeWidth="1.600"><ellipse cx="7.500" cy="8" rx="6" ry="7" /><path d="M6 13c4-1 6 5 12 3" /></svg>An Introduction to Mach...</Mark>
        <Mark $w={316}><SiGithub size={18} color="#20272f" /><span>toUpperCase78/formula...</span></Mark>
        <Mark $w={31} $big>»</Mark>
        <Mark $w={20}><Divider $h={18} /></Mark>
        <Mark $w={120}><Folder size={20} strokeWidth={1.7} color="#c7c7c7" /><MarkName>All Bookmarks</MarkName></Mark>
      </Bookmarks>

      <Viewport>
        <Page>
          <Banner>
            <b>Test mode</b>
            <BannerNote>
              <span>You're using test data. No real transactions will be processed. <b>Learn more about test mode</b></span>
              <ExternalLink size={14} />
            </BannerNote>
          </Banner>
          <Shell>
            <Side>
              <SideItem><StoreIcon /></SideItem>
              <SideItem $gap={40}><Home size={20} strokeWidth={1.7} /></SideItem>
              <SideItem><BalanceIcon /></SideItem>
              <SideItem><SwapIcon size={22} strokeWidth={1.7} /></SideItem>
              <SideItem><User size={22} strokeWidth={1.7} /></SideItem>
              <SideItem><Package size={20} strokeWidth={1.7} /></SideItem>
              <SideItem $gap={29} $fg="#b7bbd9"><LaunchIcon /></SideItem>
              <SideItem $gap={29}><Layers size={21} strokeWidth={1.7} /></SideItem>
              <SideItem><Wallet size={21} strokeWidth={1.7} /></SideItem>
              <SideItem><BillingIcon /></SideItem>
              <SideItem><ChartColumn size={21} strokeWidth={1.7} /></SideItem>
              <SideItem><Ellipsis size={22} /></SideItem>
            </Side>
            <Content>
              <TopRow>
                <Search size={17} />
                <span>Search</span>
                <TopTools>
                  <span>Developers</span>
                  <TestLabel>Test mode</TestLabel>
                  <Toggle />
                  <MessageCircleQuestionMark size={22} strokeWidth={1.7} />
                  <BellWrap><Bell size={21} strokeWidth={1.7} /></BellWrap>
                  <Settings size={21} strokeWidth={1.7} />
                  <AddCircle><Plus size={19} /></AddCircle>
                </TopTools>
              </TopRow>
              <TitleRow>
                <BackIcon size={22} />
                <Logo><SiStripe size={23} /></Logo>
                <Name>david barry</Name>
                <CopyId>Copy ID <ClipboardList size={13} /></CopyId>
                <Ghost $w={44} $h={36}><Ellipsis size={17} /></Ghost>
              </TitleRow>
              <Columns>
                <SubNav>
                  <SubItem $on>Activity</SubItem>
                  <SubItem>Profile</SubItem>
                  <SubItem>Settings</SubItem>
                  <SubItem $gap={21}>Payments</SubItem>
                  <SubItem>Payment methods</SubItem>
                  <SubItem>Invoices</SubItem>
                  <SubItem>Subscriptions</SubItem>
                  <SubItem>Customers</SubItem>
                  <SubItem>Products</SubItem>
                </SubNav>
                <Main>
                  <DetailGrid $h={35}><span /><span /><span /><span>Platform</span></DetailGrid>
                  <DetailGrid $h={35}><span /><span /><span /><span>Platform</span></DetailGrid>
                  <SectionHead>
                    <SectionTitle>Contact information</SectionTitle>
                    <Ghost $w={74} $h={35}><SquarePen size={14} />Edit</Ghost>
                  </SectionHead>
                  <Rule />
                  <DetailGrid $h={36}><span>Doing business as</span><span>None</span><span /><span>None</span></DetailGrid>
                  <DetailGrid $h={36}><span>Email</span><span>davidbarry@gmail.com</span><span>Support phone number</span><span>None</span></DetailGrid>
                </Main>
              </Columns>
            </Content>
            <Rail>
              <Plus size={22} strokeWidth={1.7} />
              <SquareTerminal size={22} strokeWidth={1.5} />
            </Rail>
          </Shell>
        </Page>

        <EditDialog>
          <EditHead>Edit person</EditHead>
          <EditBody>
            <EditFields>
              <Obligations>regulatory obligations.</Obligations>
              <DocRow>
                <DocLabel>Identity<br />document</DocLabel>
                <OptionalTag>Optional</OptionalTag>
                <Missing>Not provided</Missing>
                <SoftButton $w={77}>Upload</SoftButton>
              </DocRow>
            </EditFields>
            <ScrollTrack>
              <Thumb />
              <svg width="10" height="7" viewBox="0 0 10 7"><path d="M0 0h10L5 6z" fill="#afb4bd" /></svg>
            </ScrollTrack>
          </EditBody>
          <EditFoot>
            <SoftButton $w={72}>Cancel</SoftButton>
            <SaveButton>Save</SaveButton>
          </EditFoot>
        </EditDialog>

        <ProofDialog>
          <ProofHead>
            Proof of identity document
            <CloseButton><X size={19} strokeWidth={1.7} /></CloseButton>
          </ProofHead>
          <Notice>
            <InfoIcon />
            <NoticeText>You're currently in test mode.</NoticeText>
            <TestButton>Use test document</TestButton>
          </Notice>
          <Prompt>Please pick which document you'd like to upload in order to verify the identity of david barry</Prompt>
          <Options>
            {documents.map((d) => (
              <Option key={d}><Radio />{d}</Option>
            ))}
          </Options>
          <ProofFoot><ContinueButton>Continue</ContinueButton></ProofFoot>
        </ProofDialog>
      </Viewport>

      <Taskbar>
        <StartButton>
          <svg width="16" height="16" viewBox="0 0 16 16" fill="#fff"><path d="M0 2l7-1v6.500H0zM8 .9L16 0v7.500H8zM0 8.500h7V15l-7-1zM8 8.500h8V16l-8-1z" /></svg>
        </StartButton>
        <SearchBox>
          <svg width="17" height="17" viewBox="0 0 17 17" fill="none" stroke="#222" strokeWidth="1.400"><circle cx="10.500" cy="6.500" r="5.500" /><path d="M6.500 10.500L.8 16.200" /></svg>
          <SearchHint>Type here to search</SearchHint>
          <Mic />
        </SearchBox>
        <TaskItem><TaskView /></TaskItem>
        <TaskList>
          <TaskItem><Office c="#1d7044" d="#1d6f42" l="X" kind="grid" /></TaskItem>
          <TaskItem><FolderTask /></TaskItem>
          <TaskItem><Edge /></TaskItem>
          <TaskItem><SiWhatsapp size={24} color="#25d366" /><Badge $bg="#3a3a3a" $x={27} $y={19} $s={15} $rim>1</Badge></TaskItem>
          <TaskItem><Office c="#2b579a" d="#2b579a" l="W" kind="lines" /></TaskItem>
          <TaskItem><Office c="#d24726" d="#d24726" l="P" kind="pie" /></TaskItem>
          <TaskItem $open $on><Chrome /><Badge $bg="#689f38" $x={22} $y={19} $s={15}>S</Badge></TaskItem>
          <TaskItem $open><Fav $bg="#fff" $round $size={24}><SiPostman size={25} color="#ff6c37" /></Fav></TaskItem>
          <TaskItem $open><PyCharm /></TaskItem>
          <TaskItem $open><Fav $bg="#5865f2" $round $size={24}><SiDiscord size={16} /></Fav><Badge $bg="#ed4f55" $x={23} $y={18} $s={15}>9+</Badge></TaskItem>
          <TaskItem $open><Cmd /></TaskItem>
          <TaskItem $open><ClockApp /></TaskItem>
        </TaskList>
        <Tray>
          <Cloud />
          <Weather>14°C  Cloudy</Weather>
          <TrayChevron><ChevronUp size={18} /></TrayChevron>
          <Clock>23:52{"\n"}30/09/2024</Clock>
          <TrayBox $ml={10}>
            <svg width="17" height="17" viewBox="0 0 17 17"><path d="M0 0h17v13H7l-4 4v-4H0z" fill="#fff" /><path d="M3 4h11M3 6.800h11M3 9.600h7" stroke="#1c1c1c" /></svg>
            <Badge $bg="#3a3a3a" $x={8} $y={7} $s={15} $rim>8</Badge>
          </TrayBox>
          <TrayBox $ml={21}><Copilot /></TrayBox>
          <DesktopEdge />
        </Tray>
      </Taskbar>
    </Screen>
  );
}
